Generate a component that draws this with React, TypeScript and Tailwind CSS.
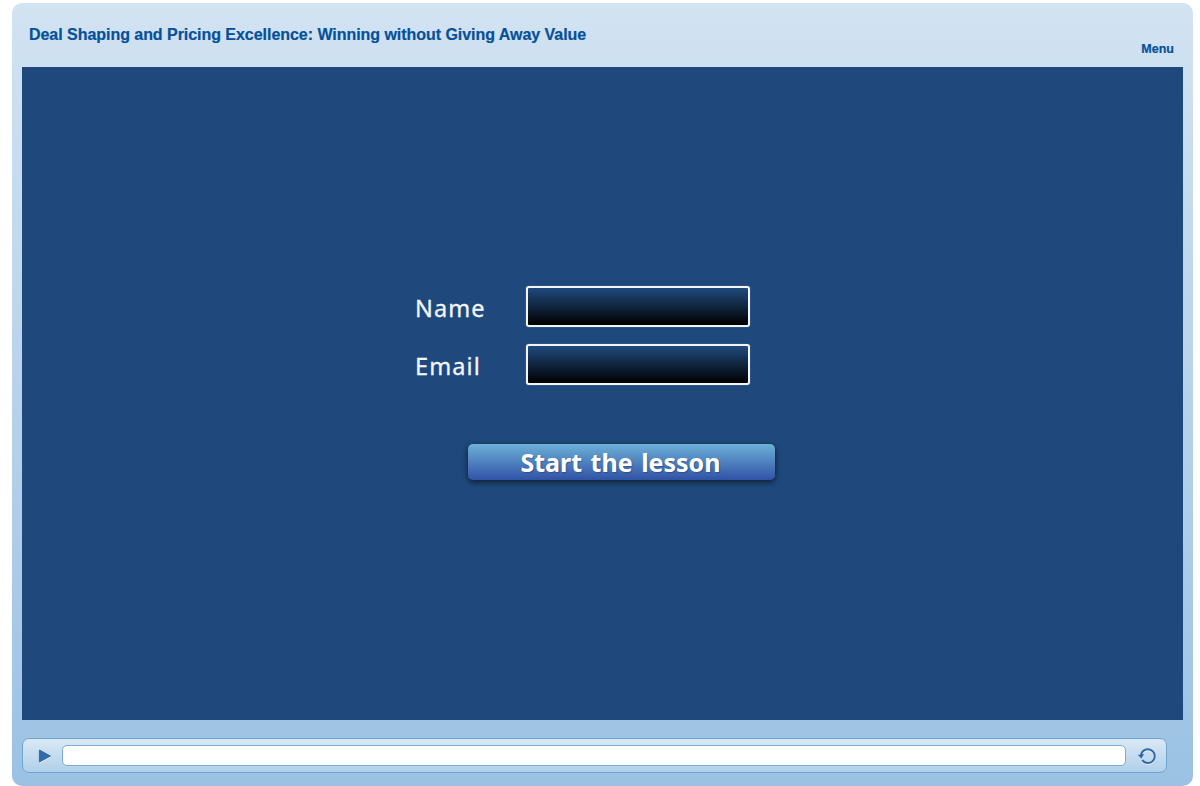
function Field({ label }: { label: string }) {
  return (
    <label className="flex h-[42px] items-center">
      <span className="w-[111px] pt-[4px] font-['Noto_Sans',sans-serif] text-[23.5px] leading-[36px] tracking-[1.1px] text-[#f3f6fa] [-webkit-text-stroke:0.3px_#f3f6fa]">
        {label}
      </span>
      <input
        type="text"
        className="h-[41px] w-[224px] rounded-[3px] border-[2px] border-[#f4f4f6] bg-linear-to-b/srgb from-[#1f4a7d] to-black px-2 text-white shadow-[0_0_1px_rgba(255,255,255,0.6)] outline-none"
      />
    </label>
  );
}

function PlayIcon() {
  return (
    <svg width="14" height="16" viewBox="0 0 14 16">
      <path d="M1.5 2.5 13 9 1.5 15.5Z" fill="#e6f1fa" />
      <path d="M1.4 2 12.4 8 1.4 14Z" fill="#316aa8" stroke="#316aa8" strokeWidth="1" strokeLinejoin="round" />
    </svg>
  );
}

function ReplayIcon() {
  return (
    <svg width="20" height="20" viewBox="0 0 20 20" fill="none">
      <path d="M4 9.2A6.9 6.9 0 1 1 5.2 14.2" stroke="#e8f3fb" strokeWidth="2" transform="translate(0 1)" />
      <path d="M4 9.2A6.9 6.9 0 1 1 5.2 14.2" stroke="#316aa8" strokeWidth="2" />
      <path d="M0.8 9 7.2 8 4.4 12.4Z" fill="#316aa8" />
    </svg>
  );
}

export default function App() {
  return (
    <div className="h-[786px] w-[1200px] overflow-hidden bg-white pl-3 pt-[3px] font-['Liberation_Sans',Arial,sans-serif]">
      <main className="flex h-[783px] w-[1181px] flex-col rounded-[10px] bg-linear-to-b/srgb from-[#d2e3f2] to-[#9bc2e3] px-[10px]">
        <header className="flex h-16 items-start justify-between pl-[7px] pr-[9px]">
          <h1 className="pt-[22px] text-[16px] font-bold leading-5 tracking-[-0.04px] text-[#05509a] [-webkit-text-stroke:0.2px_#05509a]">
            Deal Shaping and Pricing Excellence: Winning without Giving Away Value
          </h1>
          <button className="pt-[38px] text-[12.5px] font-bold leading-4 text-[#05509a] [-webkit-text-stroke:0.2px_#05509a]">
            Menu
          </button>
        </header>
        <section className="h-[653px] bg-[#1f497d] pl-[393px] pt-[218px]">
          <div className="flex flex-col gap-4">
            <Field label="Name" />
            <Field label="Email" />
          </div>
          <button className="ml-[53px] mt-[59px] flex h-9 w-[307px] items-center justify-center rounded-[5px] bg-linear-to-b/srgb from-[#6cb1d8] to-[#3152a6] pr-[2px] font-['Noto_Sans',sans-serif] text-[25px] font-bold leading-9 [word-spacing:2px] text-white shadow-[0_2px_6px_rgba(0,0,0,0.65)] [text-shadow:1px_1px_1px_rgba(30,40,70,0.4)]">
            Start the lesson
          </button>
        </section>
        <footer className="mt-[18px] flex h-[35px] w-[1145px] items-center rounded-[7px] border border-[#70a5d3] bg-linear-to-b/srgb from-[#dae8f4] to-[#b0d0ea] pl-[15px]">
          <button aria-label="Play" className="w-6">
            <PlayIcon />
          </button>
          <div className="h-[21px] w-[1064px] rounded-[5px] border border-[#79abd6] bg-white" />
          <button aria-label="Replay" className="ml-[11px]">
            <ReplayIcon />
          </button>
        </footer>
      </main>
    </div>
  );
}
